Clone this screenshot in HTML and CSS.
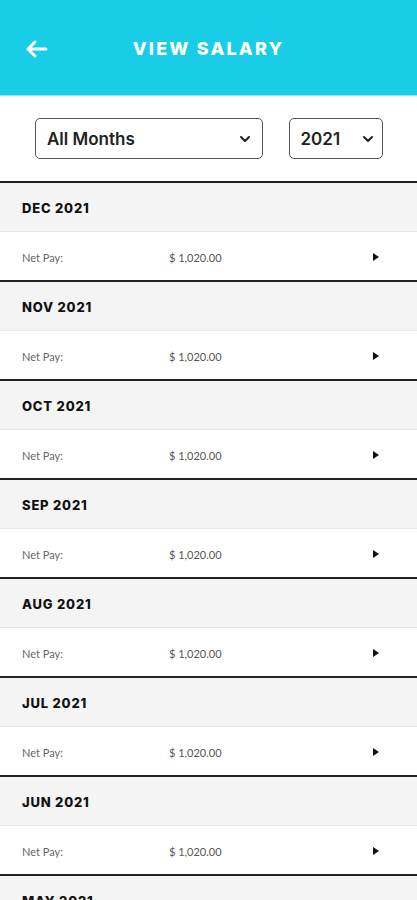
FILE: index.html
```html
<!DOCTYPE html>
<html lang="en">
<head>
    <meta charset="UTF-8">
    <meta name="viewport" content="width=device-width, initial-scale=1.0">
    <link rel="stylesheet" href="styles.css">
    <title>View Salary</title>
</head>
<body>
    <header class="topbar">
        <svg class="back" width="24" height="20" viewBox="0 0 24 20">
            <path d="M22 10H4M11 3L4 10L11 17" fill="none" stroke="#fff" stroke-width="3" stroke-linecap="round" stroke-linejoin="round"/>
        </svg>
        <h1>VIEW SALARY</h1>
    </header>

    <div class="filters">
        <div class="select months">
            <span>All Months</span>
            <svg width="12" height="8" viewBox="0 0 12 8"><path d="M2 2L6 6L10 2" fill="none" stroke="#222" stroke-width="2" stroke-linecap="round" stroke-linejoin="round"/></svg>
        </div>
        <div class="select year">
            <span>2021</span>
            <svg width="12" height="8" viewBox="0 0 12 8"><path d="M2 2L6 6L10 2" fill="none" stroke="#222" stroke-width="2" stroke-linecap="round" stroke-linejoin="round"/></svg>
        </div>
    </div>

    <div class="list">
        <div class="group"><div class="month">DEC 2021</div><div class="row"><span class="label">Net Pay:</span><span class="amount">$ 1,020.00</span><span class="tri"></span></div></div>
        <div class="group"><div class="month">NOV 2021</div><div class="row"><span class="label">Net Pay:</span><span class="amount">$ 1,020.00</span><span class="tri"></span></div></div>
        <div class="group"><div class="month">OCT 2021</div><div class="row"><span class="label">Net Pay:</span><span class="amount">$ 1,020.00</span><span class="tri"></span></div></div>
        <div class="group"><div class="month">SEP 2021</div><div class="row"><span class="label">Net Pay:</span><span class="amount">$ 1,020.00</span><span class="tri"></span></div></div>
        <div class="group"><div class="month">AUG 2021</div><div class="row"><span class="label">Net Pay:</span><span class="amount">$ 1,020.00</span><span class="tri"></span></div></div>
        <div class="group"><div class="month">JUL 2021</div><div class="row"><span class="label">Net Pay:</span><span class="amount">$ 1,020.00</span><span class="tri"></span></div></div>
        <div class="group"><div class="month">JUN 2021</div><div class="row"><span class="label">Net Pay:</span><span class="amount">$ 1,020.00</span><span class="tri"></span></div></div>
        <div class="group"><div class="month">MAY 2021</div><div class="row"><span class="label">Net Pay:</span><span class="amount">$ 1,020.00</span><span class="tri"></span></div></div>
    </div>
</body>
</html>
```

FILE: styles.css
```css
body{
    margin: 0;
    padding: 0;
    background: #fff;
    font-family: Inter, "Open Sans", sans-serif;
    height: 900px;
    overflow: hidden;
}

.topbar{
    height: 95px;
    background: #1acde6;
    border-bottom: 1px solid #8ee6f2;
    display: flex;
    align-items: center;
    position: relative;
}

.back{
    margin-left: 24px;
    margin-top: 2px;
}

.topbar h1{
    position: absolute;
    left: 0;
    right: 0;
    margin: 2px 0 0;
    text-align: center;
    color: #fff;
    font-size: 18px;
    font-weight: 800;
    letter-spacing: 2.2px;
    pointer-events: none;
}

.filters{
    height: 85px;
    display: flex;
    align-items: center;
    padding: 0 34px 0 35px;
    gap: 26px;
}

.select{
    height: 41px;
    border: 1px solid #555;
    border-radius: 5px;
    display: flex;
    align-items: center;
    justify-content: space-between;
    padding: 0 11px;
    box-sizing: border-box;
    font-size: 17px;
    font-weight: 600;
    color: #222;
}

.months{
    width: 229px;
}

.year{
    width: 95px;
    padding-right: 8px;
}

.group{
    border-top: 2px solid #222;
}

.month{
    height: 49px;
    background: #f4f4f4;
    border-bottom: 1px solid #e8e8e8;
    display: flex;
    align-items: center;
    padding-left: 22px;
    padding-top: 2px;
    box-sizing: border-box;
    font-size: 13px;
    font-weight: 800;
    letter-spacing: 0.8px;
    color: #111;
}

.row{
    height: 48px;
    display: flex;
    align-items: center;
    padding-left: 22px;
    padding-top: 2px;
    box-sizing: border-box;
    font-family: Lato, sans-serif;
    font-size: 11px;
    color: #666;
}

.label{
    width: 147px;
}

.amount{
    width: 204px;
    color: #555;
}

.tri{
    width: 0;
    height: 0;
    border-top: 4px solid transparent;
    border-bottom: 4px solid transparent;
    border-left: 6px solid #111;
}
```
